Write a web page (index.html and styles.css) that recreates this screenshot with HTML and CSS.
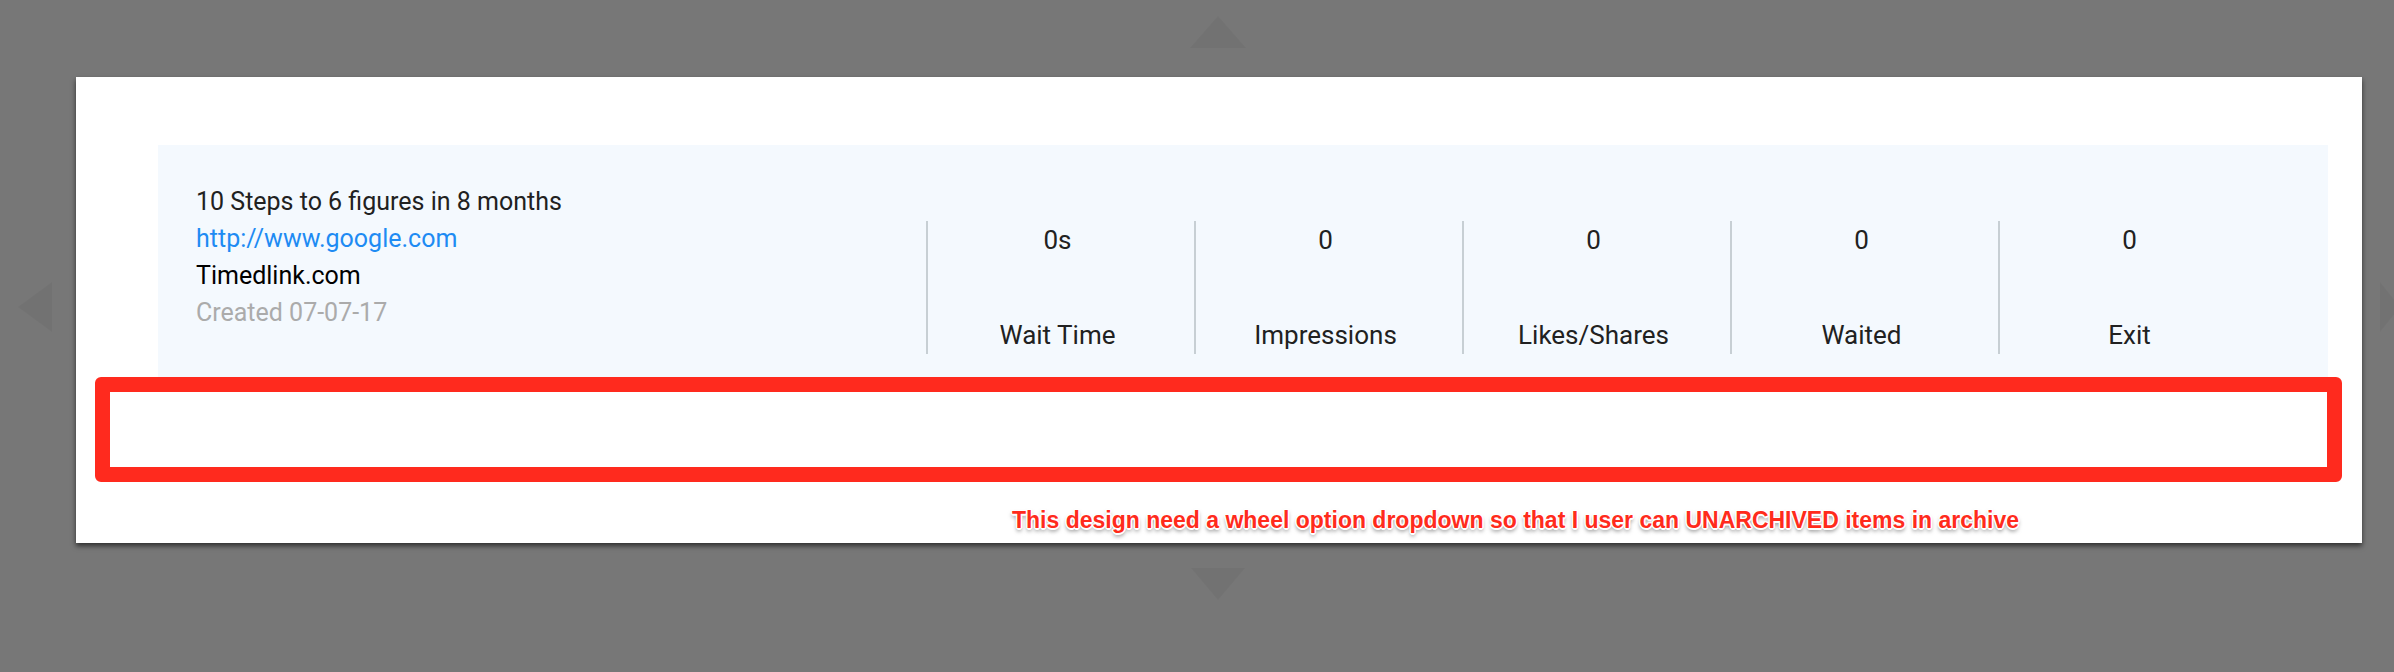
FILE: index.html
```html
<!DOCTYPE html>
<html lang="en">
<head>
<meta charset="utf-8">
<title>Archived item</title>
<link rel="stylesheet" href="styles.css">
</head>
<body>
<svg class="nav-arrow nav-up" width="56" height="32" viewBox="0 0 56 32"><polygon points="28,0 56,32 0,32"/></svg>
<svg class="nav-arrow nav-down" width="54" height="32" viewBox="0 0 54 32"><polygon points="0,0 54,0 27,32"/></svg>
<svg class="nav-arrow nav-left" width="34" height="50" viewBox="0 0 34 50"><polygon points="34,0 34,50 0,25"/></svg>
<svg class="nav-arrow nav-right" width="20" height="50" viewBox="0 0 20 50"><polygon points="0,0 0,50 20,25"/></svg>

<div class="card">
  <div class="panel">
    <div class="info">
      <div class="title">10 Steps to 6 figures in 8 months</div>
      <div class="link">http://www.google.com</div>
      <div class="domain">Timedlink.com</div>
      <div class="created">Created 07-07-17</div>
    </div>
    <div class="stats">
      <div class="stat"><div class="value">0s</div><div class="label">Wait Time</div></div>
      <div class="stat"><div class="value">0</div><div class="label">Impressions</div></div>
      <div class="stat"><div class="value">0</div><div class="label">Likes/Shares</div></div>
      <div class="stat"><div class="value">0</div><div class="label">Waited</div></div>
      <div class="stat"><div class="value">0</div><div class="label">Exit</div></div>
    </div>
  </div>
  <div class="mark-box"></div>
  <div class="note">This design need a wheel option dropdown so that I user can UNARCHIVED items in archive</div>
</div>
</body>
</html>
```

FILE: styles.css
```css
html, body {
  margin: 0;
  padding: 0;
}

body {
  width: 2394px;
  height: 672px;
  background: #777777;
  position: relative;
  overflow: hidden;
  font-family: Roboto, "Liberation Sans", Arial, sans-serif;
}

.nav-arrow {
  position: absolute;
  fill: rgba(0, 0, 0, 0.035);
}

.nav-up { left: 1190px; top: 16px; }
.nav-down { left: 1191px; top: 568px; }
.nav-left { left: 18px; top: 282px; }
.nav-right { left: 2380px; top: 282px; }

.card {
  margin: 77px 0 0 76px;
  width: 2286px;
  height: 466px;
  box-sizing: border-box;
  padding: 68px 34px 0 82px;
  background: #ffffff;
  box-shadow: 0 3px 5px rgba(0, 0, 0, 0.6);
  position: relative;
}

.panel {
  display: flex;
  height: 232px;
  box-sizing: border-box;
  padding-top: 38px;
  background: #f4f9fe;
}

.info {
  width: 768px;
  box-sizing: border-box;
  padding-left: 38px;
  font-size: 25px;
  line-height: 37px;
}

.title {
  color: #212121;
}

.link {
  color: #1e8bf3;
}

.domain {
  color: #000000;
}

.created {
  color: #ababab;
}

.stats {
  display: flex;
  margin-top: 38px;
  height: 133px;
}

.stat {
  width: 268px;
  box-sizing: border-box;
  border-left: 2px solid #c7cfd4;
  padding: 1px 7px 0 0;
  display: flex;
  flex-direction: column;
  justify-content: space-between;
  align-items: center;
  font-size: 26px;
  line-height: 37px;
  color: #212121;
}

.mark-box {
  margin-left: -63px;
  width: 2247px;
  height: 105px;
  box-sizing: border-box;
  border: 15px solid #ff2a1e;
  border-radius: 6px;
  background: #ffffff;
}

.note {
  margin-top: 23px;
  padding-left: 854px;
  font-family: "Liberation Sans", Arial, sans-serif;
  font-weight: bold;
  font-size: 23px;
  line-height: 30px;
  color: #ff2b1c;
  white-space: nowrap;
  text-shadow:
    1.5px 0 0 #fff, -1.5px 0 0 #fff, 0 1.5px 0 #fff, 0 -1.5px 0 #fff,
    1px 1px 0 #fff, -1px -1px 0 #fff, 1px -1px 0 #fff, -1px 1px 0 #fff,
    0 3px 4px rgba(0, 0, 0, 0.55);
}
```
